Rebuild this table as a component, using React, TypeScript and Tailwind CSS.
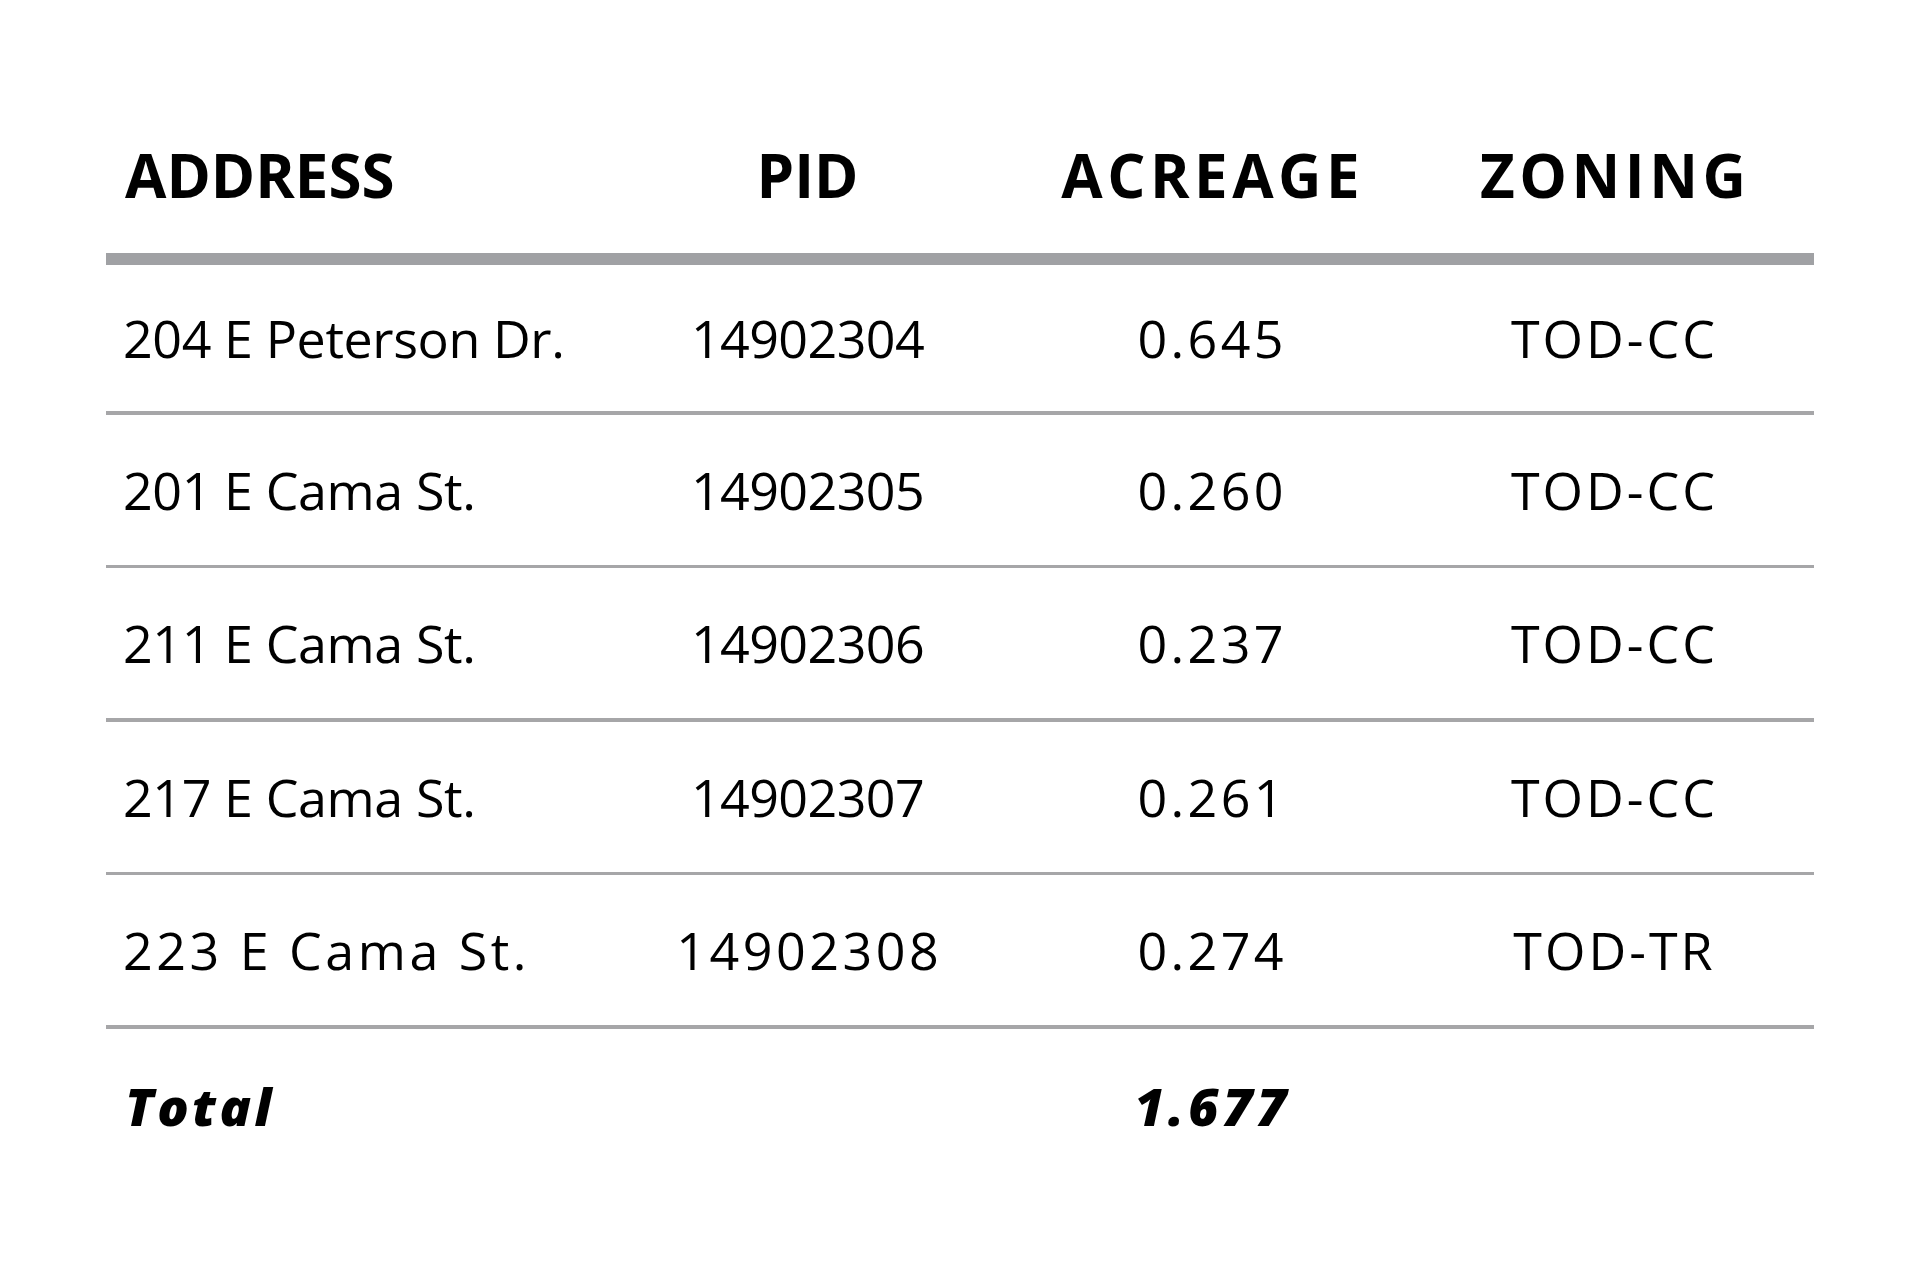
import React from 'react';

type Parcel = {
  address: string;
  pid: string;
  acreage: string;
  zoning: string;
  wide?: boolean;
};

const parcels: Parcel[] = [
  { address: '204 E Peterson Dr.', pid: '14902304', acreage: '0.645', zoning: 'TOD-CC' },
  { address: '201 E Cama St.', pid: '14902305', acreage: '0.260', zoning: 'TOD-CC' },
  { address: '211 E Cama St.', pid: '14902306', acreage: '0.237', zoning: 'TOD-CC' },
  { address: '217 E Cama St.', pid: '14902307', acreage: '0.261', zoning: 'TOD-CC' },
  { address: '223 E Cama St.', pid: '14902308', acreage: '0.274', zoning: 'TOD-TR', wide: true },
];

const cols = 'grid grid-cols-[500px_403px_403px_402px] items-center';

export default function App() {
  return (
    <div className="min-h-screen bg-white pt-[97px] font-['Open_Sans','Liberation_Sans',sans-serif] text-black">
      <div className="mx-auto w-[1708px]">
        {/* Header */}
        <div className={`${cols} h-[156px] text-[60px] font-bold leading-none`}>
          <div className="pl-[19px]">ADDRESS</div>
          <div className="text-center">PID</div>
          <div className="text-center tracking-[4.5px] pl-[4.5px]">ACREAGE</div>
          <div className="text-center tracking-[4.5px] pl-[4.5px]">ZONING</div>
        </div>
        <div className="h-[12px] bg-[#a0a1a4]" />

        {/* Rows */}
        {parcels.map((p, i) => (
          <div key={p.pid}>
            <div className={`${cols} ${i === 0 ? 'h-[146px]' : 'h-[150px]'} text-[52px] font-normal leading-none`}>
              <div className={`pl-[17px] ${p.wide ? 'tracking-[3.5px]' : 'tracking-[-0.4px]'}`}>{p.address}</div>
              <div className={`text-center ${p.wide ? 'tracking-[3.5px] pl-[3.5px]' : 'tracking-[-0.6px]'}`}>{p.pid}</div>
              <div className="text-center tracking-[3.4px] pl-[3.4px]">{p.acreage}</div>
              <div className="text-center tracking-[3px] pl-[3px]">{p.zoning}</div>
            </div>
            <div className="h-[3.5px] bg-[#a6a6a8]" />
          </div>
        ))}

        {/* Total */}
        <div className={`${cols} h-[154px] text-[52px] font-extrabold italic leading-none`}>
          <div className="pl-[19px] tracking-[3.5px]">Total</div>
          <div />
          <div className="text-center tracking-[4px] pl-[4px]">1.677</div>
          <div />
        </div>
      </div>
    </div>
  );
}
